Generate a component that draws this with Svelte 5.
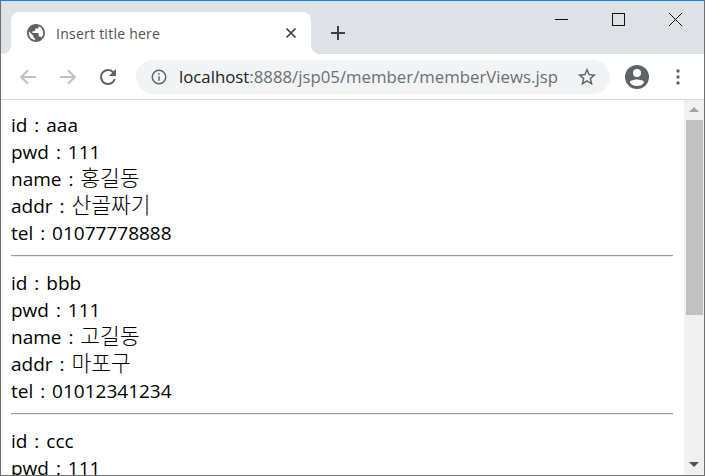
<script lang="ts">
  const members = [
    { id: 'aaa', pwd: '111', name: '홍길동', addr: '산골짜기', tel: '01077778888' },
    { id: 'bbb', pwd: '111', name: '고길동', addr: '마포구', tel: '01012341234' },
    { id: 'ccc', pwd: '111', name: '', addr: '', tel: '' }
  ];
</script>

<div class="window">
  <header class="tabstrip">
    <div class="tab">
      <svg class="favicon" width="18" height="18" viewBox="2 2 20 20" aria-hidden="true">
        <path fill="#5f6368" d="M12 2C6.48 2 2 6.48 2 12s4.48 10 10 10 10-4.48 10-10S17.52 2 12 2zm-1 17.93C7.05 19.44 4 16.08 4 12c0-.62.08-1.21.21-1.79L9 15v1c0 1.1.9 2 2 2v1.93zm6.9-2.54c-.26-.81-1-1.39-1.9-1.39h-1v-3c0-.55-.45-1-1-1H8v-2h2c.55 0 1-.45 1-1V7h2c1.1 0 2-.9 2-2v-.41c2.93 1.19 5 4.06 5 7.41 0 2.08-.8 3.97-2.1 5.39z"/>
      </svg>
      <span class="tab-title">Insert title here</span>
      <svg class="tab-close" width="12" height="12" viewBox="0 0 12 12" aria-hidden="true">
        <path d="M1.500 1.500l9 9M10.500 1.500l-9 9" stroke="#3c4043" stroke-width="1.700" fill="none"/>
      </svg>
    </div>
    <svg class="new-tab" width="14" height="14" viewBox="0 0 14 14" aria-hidden="true">
      <path d="M7 0v14M0 7h14" stroke="#3c4043" stroke-width="2" fill="none"/>
    </svg>
    <div class="caption">
      <button class="caption-btn" aria-label="Minimize">
        <svg width="14" height="14" viewBox="0 0 14 14"><path d="M1 7.500h13" stroke="#111" fill="none"/></svg>
      </button>
      <button class="caption-btn" aria-label="Maximize">
        <svg width="14" height="14" viewBox="0 0 14 14"><rect x="1.500" y="1.500" width="12" height="12" stroke="#111" fill="none"/></svg>
      </button>
      <button class="caption-btn" aria-label="Close">
        <svg width="14" height="14" viewBox="0 0 14 14"><path d="M1 1l13 13M14 1L1 14" stroke="#111" fill="none"/></svg>
      </button>
    </div>
  </header>

  <nav class="toolbar">
    <svg class="nav-icon back" width="18" height="18" viewBox="0 0 16 16" aria-hidden="true">
      <path d="M15 8H2M8 2L2 8l6 6" stroke="#bdc0c4" stroke-width="1.700" fill="none"/>
    </svg>
    <svg class="nav-icon forward" width="18" height="18" viewBox="0 0 16 16" aria-hidden="true">
      <path d="M1 8h13M8 2l6 6-6 6" stroke="#bdc0c4" stroke-width="1.700" fill="none"/>
    </svg>
    <svg class="nav-icon reload" width="24" height="24" viewBox="0 0 24 24" aria-hidden="true">
      <path fill="#5f6368" d="M17.650 6.350A7.960 7.960 0 0 0 12 4a8 8 0 1 0 7.730 10h-2.080A6 6 0 1 1 12 6c1.660 0 3.140.69 4.220 1.780L13 11h7V4l-2.350 2.350z"/>
    </svg>
    <div class="omnibox">
      <svg class="info" width="18" height="18" viewBox="0 0 24 24" aria-hidden="true">
        <path fill="#5f6368" d="M11 7h2v2h-2zm0 4h2v6h-2zm1-9a10 10 0 1 0 0 20 10 10 0 0 0 0-20zm0 18a8 8 0 1 1 0-16 8 8 0 0 1 0 16z"/>
      </svg>
      <span class="url"><span class="host">localhost</span>:8888/jsp05/member/memberViews.jsp</span>
      <svg class="star" width="22" height="22" viewBox="0 0 24 24" aria-hidden="true">
        <path fill="#5f6368" d="M22 9.240l-7.190-.62L12 2 9.190 8.630 2 9.240l5.460 4.730L5.820 21 12 17.270 18.180 21l-1.630-7.030L22 9.240zM12 15.400l-3.760 2.270 1-4.280-3.320-2.880 4.380-.38L12 6.100l1.710 4.040 4.380.38-3.320 2.880 1 4.280L12 15.400z"/>
      </svg>
    </div>
    <svg class="avatar" width="24" height="24" viewBox="0 0 24 24" aria-hidden="true">
      <path fill="#5f6368" d="M12 0a12 12 0 1 0 0 24 12 12 0 0 0 0-24zm0 4a4 4 0 1 1 0 8 4 4 0 0 1 0-8zm0 17c-3 0-5.600-1.400-7.200-3.600C5.100 15.400 9.600 14.500 12 14.500s6.900.9 7.200 2.900C17.600 19.600 15 21 12 21z"/>
    </svg>
    <svg class="menu" width="4" height="16" viewBox="0 0 4 16" aria-hidden="true">
      <circle cx="2" cy="2" r="1.700" fill="#5f6368"/>
      <circle cx="2" cy="8" r="1.700" fill="#5f6368"/>
      <circle cx="2" cy="14" r="1.700" fill="#5f6368"/>
    </svg>
  </nav>

  <div class="viewport">
    <main class="page">
      {#each members as m}
        <div class="row">id : {m.id}</div>
        <div class="row">pwd : {m.pwd}</div>
        {#if m.name}
          <div class="row">name : <span class="ko">{m.name}</span></div>
          <div class="row">addr : <span class="ko">{m.addr}</span></div>
          <div class="row">tel : {m.tel}</div>
          <hr />
        {/if}
      {/each}
    </main>
    <div class="scrollbar">
      <span class="arrow up"></span>
      <div class="track"><div class="thumb"></div></div>
      <span class="arrow down"></span>
    </div>
  </div>
</div>

<style>
  :global(body) {
    margin: 0;
    overflow: hidden;
  }
  .window {
    width: 705px;
    height: 476px;
    box-sizing: border-box;
    border: 1px solid #6f6f6f;
    border-top: 1px solid #1883d7;
    display: flex;
    flex-direction: column;
    overflow: hidden;
    background: #fff;
    font-family: "Open Sans", "Noto Sans CJK KR", sans-serif;
  }
  .tabstrip {
    height: 53px;
    flex: none;
    background: #dee1e6;
    display: flex;
    align-items: flex-end;
  }
  .tab {
    position: relative;
    width: 300px;
    height: 42px;
    margin-left: 10px;
    background: #fff;
    border-radius: 8px 8px 0 0;
    display: flex;
    align-items: center;
    box-sizing: border-box;
    padding: 0 14px 0 16px;
  }
  .tab::before,
  .tab::after {
    content: "";
    position: absolute;
    bottom: 0;
    width: 8px;
    height: 8px;
  }
  .tab::before {
    left: -8px;
    background: radial-gradient(circle at 0 0, #dee1e6 7.500px, #fff 8px);
  }
  .tab::after {
    right: -8px;
    background: radial-gradient(circle at 100% 0, #dee1e6 7.500px, #fff 8px);
  }
  .tab-title {
    margin-left: 11px;
    flex: 1;
    font-size: 14px;
    color: #4d5156;
    letter-spacing: 0.250px;
  }
  .new-tab {
    margin: 0 0 14px 20px;
  }
  .caption {
    margin-left: auto;
    margin-right: 1px;
    align-self: flex-start;
    display: flex;
  }
  .caption-btn {
    width: 57px;
    height: 36px;
    padding: 0;
    border: 0;
    background: none;
    display: flex;
    align-items: center;
    justify-content: center;
  }
  .toolbar {
    height: 46px;
    flex: none;
    box-sizing: border-box;
    background: #fff;
    border-bottom: 1px solid #dadce0;
    display: flex;
    align-items: center;
  }
  .back { margin-left: 18px; }
  .forward { margin-left: 22px; }
  .reload { margin-left: 19px; }
  .omnibox {
    width: 474px;
    height: 34px;
    margin-left: 16px;
    border-radius: 17px;
    background: #f1f3f4;
    display: flex;
    align-items: center;
    box-sizing: border-box;
    padding: 0 12px 0 14px;
  }
  .url {
    margin-left: 11px;
    flex: 1;
    font-size: 16.800px;
    color: #6b7075;
    white-space: nowrap;
  }
  .host { color: #202124; }
  .avatar { margin-left: 15px; }
  .menu { margin-left: 27px; }
  .viewport {
    flex: 1;
    min-height: 0;
    display: flex;
  }
  .page {
    flex: 1;
    min-width: 0;
    padding: 12px 11px 0 10px;
    font-size: 19px;
    line-height: 27px;
    word-spacing: 2px;
    color: #000;
    overflow: hidden;
  }
  .ko {
    font-size: 21.500px;
    font-weight: 300;
    line-height: 0;
  }
  .row {
    height: 27px;
    white-space: nowrap;
  }
  hr {
    margin: 8px 0 13px;
    border: 0;
    border-top: 1px solid #9a9a9a;
    border-bottom: 1px solid #eee;
  }
  .scrollbar {
    width: 20px;
    flex: none;
    background: #f0f0f0;
    display: flex;
    flex-direction: column;
    align-items: center;
  }
  .track {
    flex: 1;
    width: 100%;
    padding: 8px 1px 0 2px;
    box-sizing: border-box;
  }
  .thumb {
    height: 195px;
    background: #c1c1c1;
  }
  .arrow {
    width: 0;
    height: 0;
    flex: none;
    border-left: 5px solid transparent;
    border-right: 5px solid transparent;
  }
  .up {
    margin-top: 7px;
    border-bottom: 5px solid #a3a3a3;
  }
  .down {
    margin-bottom: 8px;
    border-top: 5px solid #505050;
  }
</style>
